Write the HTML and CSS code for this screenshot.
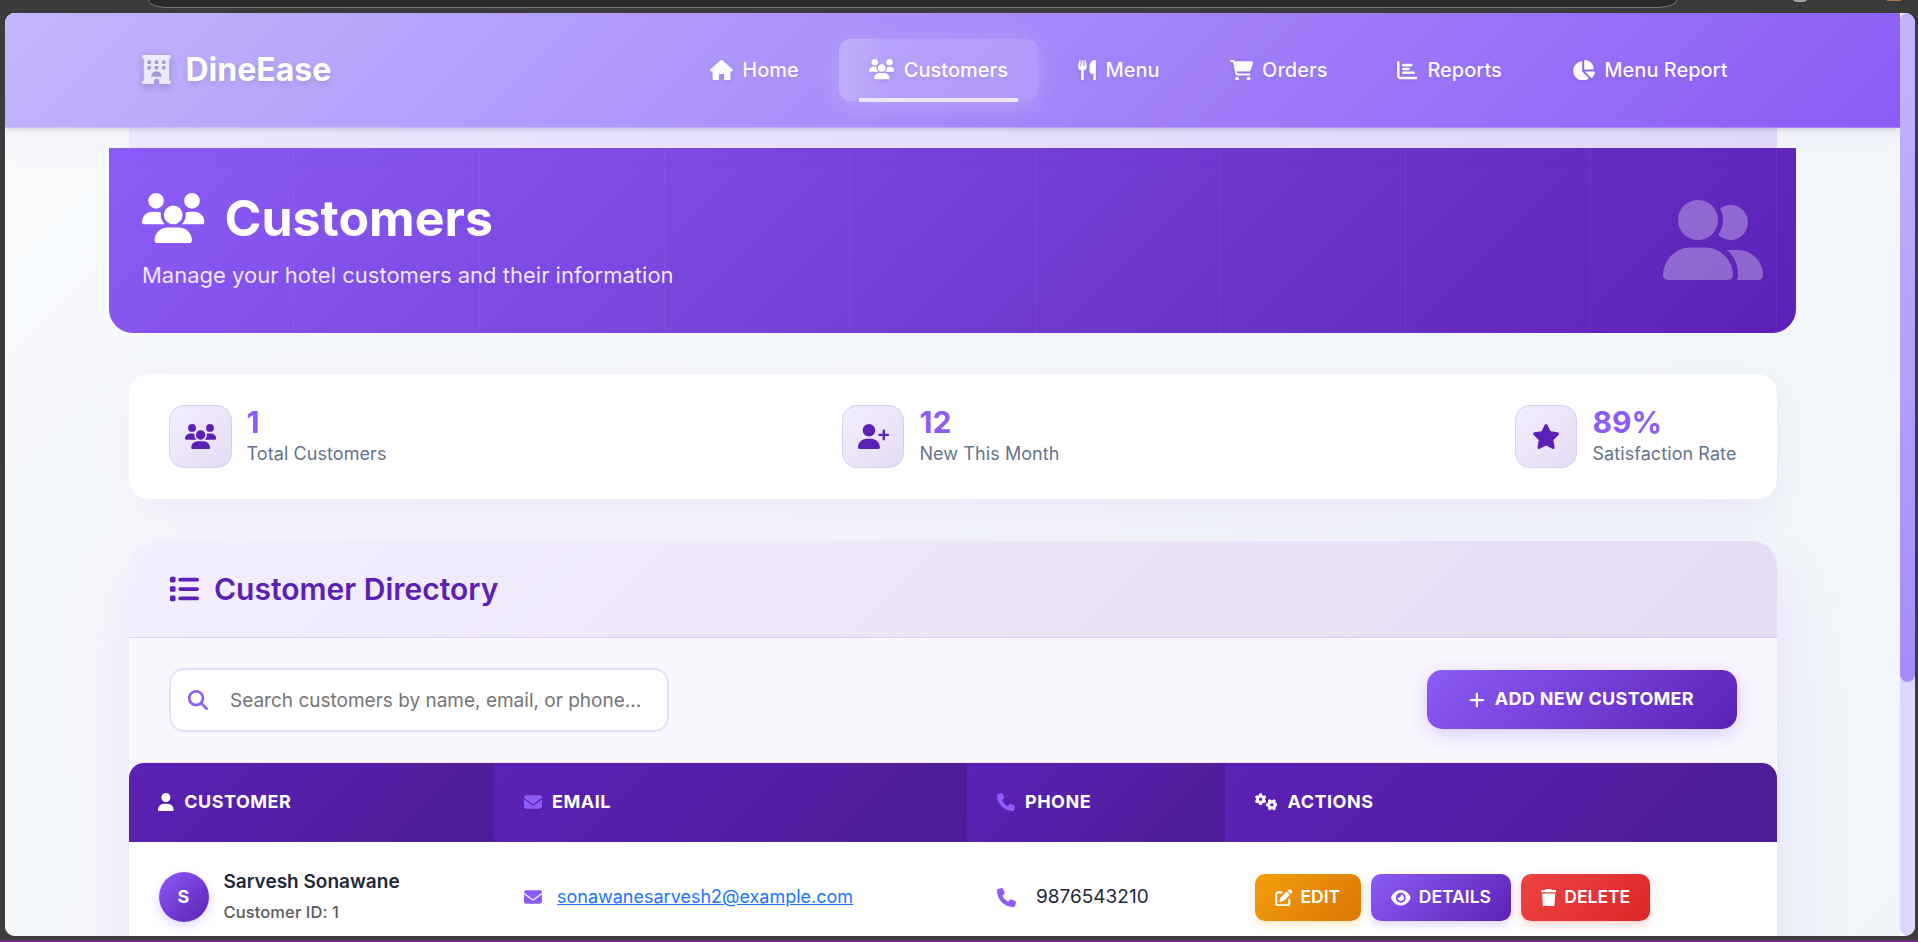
FILE: index.html
```html
<!DOCTYPE html>
<html lang="en">
<head>
<meta charset="utf-8">
<title>DineEase - Customers</title>
<link rel="stylesheet" href="styles.css">
</head>
<body>
<svg class="sprite" aria-hidden="true">
  <symbol id="hotel" viewBox="0 0 512 512"><path d="M0 32C0 14.3 14.3 0 32 0H480c17.7 0 32 14.3 32 32s-14.3 32-32 32V448c17.7 0 32 14.3 32 32s-14.3 32-32 32H304V464c0-26.5-21.5-48-48-48s-48 21.5-48 48v48H32c-17.7 0-32-14.3-32-32s14.3-32 32-32V64C14.3 64 0 49.7 0 32zm96 80v32c0 8.800 7.200 16 16 16h32c8.800 0 16-7.200 16-16V112c0-8.800-7.200-16-16-16H112c-8.800 0-16 7.200-16 16zM240 96c-8.800 0-16 7.200-16 16v32c0 8.800 7.200 16 16 16h32c8.800 0 16-7.200 16-16V112c0-8.800-7.200-16-16-16H240zm112 16v32c0 8.800 7.200 16 16 16h32c8.800 0 16-7.200 16-16V112c0-8.800-7.200-16-16-16H368c-8.800 0-16 7.200-16 16zM112 192c-8.800 0-16 7.200-16 16v32c0 8.800 7.200 16 16 16h32c8.800 0 16-7.200 16-16V208c0-8.800-7.200-16-16-16H112zm112 16v32c0 8.800 7.200 16 16 16h32c8.800 0 16-7.200 16-16V208c0-8.800-7.200-16-16-16H240c-8.800 0-16 7.200-16 16zm144-16c-8.800 0-16 7.200-16 16v32c0 8.800 7.200 16 16 16h32c8.800 0 16-7.200 16-16V208c0-8.800-7.200-16-16-16H368zM328 384c13.300 0 24.300-10.900 21-23.800c-10.600-41.500-48.200-72.200-93-72.200s-82.500 30.700-93 72.200c-3.300 12.800 7.800 23.800 21 23.800H328z"/></symbol>
  <symbol id="house" viewBox="0 0 576 512"><path d="M575.8 255.5c0 18-15 32.1-32 32.1h-32l.7 160.2c0 2.700-.2 5.400-.5 8.100V472c0 22.100-17.900 40-40 40H456c-1.100 0-2.200 0-3.300-.1c-1.400 .1-2.800 .1-4.200 .1H416 392c-22.100 0-40-17.900-40-40V448 384c0-17.700-14.300-32-32-32H256c-17.700 0-32 14.300-32 32v64 24c0 22.100-17.900 40-40 40H160 128.100c-1.500 0-3-.1-4.500-.2c-1.200 .1-2.400 .2-3.600 .2H104c-22.100 0-40-17.900-40-40V360c0-.9 0-1.900 .1-2.800V287.600H32c-18 0-32-14-32-32.100c0-9 3-17 10-24L266.400 8c7-7 15-8 22-8s15 2 21 7L564.800 231.500c8 7 12 15 11 24z"/></symbol>
  <symbol id="users" viewBox="0 0 640 512"><path d="M144 0a80 80 0 1 1 0 160A80 80 0 1 1 144 0zM512 0a80 80 0 1 1 0 160A80 80 0 1 1 512 0zM0 298.7C0 239.800 47.800 192 106.700 192h42.700c15.900 0 31 3.500 44.600 9.700c-1.300 7.200-1.900 14.700-1.900 22.300c0 38.200 16.800 72.500 43.300 96c-.2 0-.4 0-.7 0H21.300C9.600 320 0 310.400 0 298.700zM405.300 320c-.2 0-.4 0-.7 0c26.600-23.500 43.300-57.800 43.300-96c0-7.600-.7-15-1.900-22.300c13.600-6.300 28.700-9.700 44.600-9.700h42.700C592.200 192 640 239.800 640 298.700c0 11.800-9.600 21.300-21.300 21.300H405.300zM224 224a96 96 0 1 1 192 0 96 96 0 1 1 -192 0zM128 485.300C128 411.700 187.700 352 261.300 352H378.700C452.300 352 512 411.700 512 485.300c0 14.700-11.900 26.700-26.700 26.700H154.700c-14.700 0-26.700-11.900-26.700-26.700z"/></symbol>
  <symbol id="utensils" viewBox="0 0 448 512"><path d="M416 0C400 0 288 32 288 176V288c0 35.300 28.700 64 64 64h32V480c0 17.700 14.300 32 32 32s32-14.300 32-32V352 240 32c0-17.700-14.300-32-32-32zM64 16C64 7.800 57.900 1 49.700 .1S34.200 4.600 32.400 12.500L2.100 148.800C.7 155.100 0 161.500 0 167.900c0 45.900 35.100 83.600 80 87.700V480c0 17.700 14.300 32 32 32s32-14.300 32-32V255.600c44.900-4.100 80-41.800 80-87.700c0-6.400-.7-12.800-2.100-19.100L191.600 12.500c-1.800-8-9.300-13.300-17.400-12.400S160 7.800 160 16V150.200c0 5.400-4.400 9.800-9.800 9.800c-5.100 0-9.300-3.900-9.800-9L127.900 14.600C127.200 6.300 120.300 0 112 0s-15.200 6.300-15.900 14.600L83.700 151c-.5 5.100-4.700 9-9.800 9c-5.400 0-9.800-4.400-9.800-9.800V16z"/></symbol>
  <symbol id="cart" viewBox="0 0 576 512"><path d="M0 24C0 10.700 10.700 0 24 0H69.500c22 0 41.500 12.800 50.600 32h411c26.300 0 45.500 25 38.600 50.400l-41 152.300c-8.500 31.400-37 53.300-69.500 53.300H170.700l5.400 28.500c2.200 11.300 12.100 19.500 23.600 19.500H488c13.300 0 24 10.700 24 24s-10.700 24-24 24H199.700c-34.600 0-64.300-24.600-70.700-58.500L77.400 54.500c-.7-3.800-4-6.500-7.900-6.500H24C10.700 48 0 37.300 0 24zM128 464a48 48 0 1 1 96 0 48 48 0 1 1 -96 0zm336-48a48 48 0 1 1 0 96 48 48 0 1 1 0-96z"/></symbol>
  <symbol id="chart-bar" viewBox="0 0 512 512"><path d="M32 32c17.700 0 32 14.300 32 32V400c0 8.800 7.200 16 16 16H480c17.700 0 32 14.300 32 32s-14.300 32-32 32H80c-44.200 0-80-35.800-80-80V64C0 46.300 14.300 32 32 32zm96 96c0-17.700 14.300-32 32-32l192 0c17.700 0 32 14.300 32 32s-14.300 32-32 32H160c-17.700 0-32-14.300-32-32zm32 64H288c17.700 0 32 14.300 32 32s-14.300 32-32 32H160c-17.700 0-32-14.300-32-32s14.300-32 32-32zm0 96H416c17.700 0 32 14.300 32 32s-14.300 32-32 32H160c-17.700 0-32-14.300-32-32s14.300-32 32-32z"/></symbol>
  <symbol id="chart-pie" viewBox="0 0 576 512"><path d="M304 240V16.600c0-9 7-16.600 16-16.600C443.700 0 544 100.300 544 224c0 9-7.600 16-16.600 16H304zM32 272C32 150.700 122.100 50.300 239 34.300c9.200-1.300 17 6.100 17 15.400V288L412.500 444.500c6.700 6.700 6.200 17.700-1.500 23.100C371.800 495.600 323.800 512 272 512C139.500 512 32 404.600 32 272zm526.400 16c9.300 0 16.600 7.800 15.400 17c-7.700 55.900-34.600 105.600-73.900 142.300c-6 5.600-15.400 5.200-21.200-.7L320 288H558.400z"/></symbol>
  <symbol id="user-group" viewBox="0 0 640 512"><path d="M96 128a128 128 0 1 1 256 0A128 128 0 1 1 96 128zM0 482.300C0 383.800 79.800 304 178.300 304h91.400C368.200 304 448 383.800 448 482.300c0 16.400-13.300 29.700-29.700 29.700H29.700C13.300 512 0 498.700 0 482.300zM609.300 512H471.400c5.400-9.400 8.600-20.300 8.600-32v-8c0-60.700-27.100-115.200-69.800-151.800c2.400-.1 4.700-.2 7.100-.2h61.400C567.800 320 640 392.200 640 481.300c0 17-13.800 30.700-30.700 30.700zM432 256c-31 0-59-12.600-79.300-32.900C372.400 196.500 384 163.600 384 128c0-26.800-6.600-52.100-18.300-74.300C384.300 40.100 407.200 32 432 32c61.900 0 112 50.100 112 112s-50.100 112-112 112z"/></symbol>
  <symbol id="user-plus" viewBox="0 0 640 512"><path d="M96 128a128 128 0 1 1 256 0A128 128 0 1 1 96 128zM0 482.300C0 383.800 79.800 304 178.300 304h91.400C368.200 304 448 383.800 448 482.300c0 16.400-13.300 29.700-29.700 29.700H29.700C13.300 512 0 498.700 0 482.300zM504 312V248H440c-13.300 0-24-10.700-24-24s10.700-24 24-24h64V136c0-13.300 10.700-24 24-24s24 10.700 24 24v64h64c13.300 0 24 10.700 24 24s-10.700 24-24 24H552v64c0 13.300-10.700 24-24 24s-24-10.700-24-24z"/></symbol>
  <symbol id="star" viewBox="0 0 576 512"><path d="M316.900 18C311.600 7 300.400 0 288.100 0s-23.400 7-28.800 18L195 150.300 51.400 171.500c-12 1.800-22 10.200-25.700 21.700s-.7 24.200 7.900 32.700L137.800 329 113.200 474.700c-2 12 3 24.200 12.900 31.300s23 8 33.800 2.300l128.300-68.500 128.300 68.500c10.800 5.700 23.900 4.900 33.800-2.300s14.900-19.300 12.900-31.300L438.500 329 542.700 225.900c8.600-8.500 11.700-21.200 7.900-32.700s-13.700-19.900-25.700-21.700L381.200 150.300 316.900 18z"/></symbol>
  <symbol id="list" viewBox="0 0 512 512"><path d="M40 48C26.700 48 16 58.700 16 72v48c0 13.300 10.700 24 24 24H88c13.300 0 24-10.700 24-24V72c0-13.300-10.700-24-24-24H40zM192 64c-17.700 0-32 14.300-32 32s14.300 32 32 32H480c17.700 0 32-14.300 32-32s-14.300-32-32-32H192zm0 160c-17.700 0-32 14.300-32 32s14.300 32 32 32H480c17.700 0 32-14.300 32-32s-14.300-32-32-32H192zm0 160c-17.700 0-32 14.300-32 32s14.300 32 32 32H480c17.700 0 32-14.300 32-32s-14.300-32-32-32H192zM16 232v48c0 13.300 10.700 24 24 24H88c13.300 0 24-10.700 24-24V232c0-13.300-10.700-24-24-24H40c-13.300 0-24 10.700-24 24zM40 368c-13.300 0-24 10.700-24 24v48c0 13.300 10.700 24 24 24H88c13.300 0 24-10.700 24-24V392c0-13.300-10.700-24-24-24H40z"/></symbol>
  <symbol id="search" viewBox="0 0 512 512"><path d="M416 208c0 45.900-14.900 88.300-40 122.700L502.600 457.400c12.500 12.500 12.500 32.800 0 45.300s-32.800 12.500-45.300 0L330.700 376c-34.400 25.200-76.800 40-122.700 40C93.100 416 0 322.900 0 208S93.100 0 208 0S416 93.100 416 208zM208 352a144 144 0 1 0 0-288 144 144 0 1 0 0 288z"/></symbol>
  <symbol id="plus" viewBox="0 0 448 512"><path d="M256 80c0-17.700-14.300-32-32-32s-32 14.300-32 32V224H48c-17.700 0-32 14.300-32 32s14.300 32 32 32H192V432c0 17.700 14.300 32 32 32s32-14.300 32-32V288H400c17.700 0 32-14.300 32-32s-14.300-32-32-32H256V80z"/></symbol>
  <symbol id="user" viewBox="0 0 448 512"><path d="M224 256A128 128 0 1 0 224 0a128 128 0 1 0 0 256zm-45.700 48C79.800 304 0 383.800 0 482.300C0 498.700 13.300 512 29.700 512H418.300c16.400 0 29.700-13.300 29.700-29.700C448 383.800 368.200 304 269.700 304H178.300z"/></symbol>
  <symbol id="envelope" viewBox="0 0 512 512"><path d="M48 64C21.500 64 0 85.500 0 112c0 15.100 7.100 29.300 19.200 38.400L236.800 313.600c11.400 8.500 27 8.500 38.400 0L492.800 150.400c12.100-9.100 19.200-23.300 19.200-38.400c0-26.500-21.500-48-48-48H48zM0 176V384c0 35.300 28.700 64 64 64H448c35.300 0 64-28.700 64-64V176L294.400 339.200c-22.800 17.100-54 17.100-76.800 0L0 176z"/></symbol>
  <symbol id="phone" viewBox="0 0 512 512"><path d="M164.900 24.600c-7.700-18.600-28-28.500-47.400-23.200l-88 24C12.100 30.200 0 46 0 64C0 311.400 200.600 512 448 512c18 0 33.800-12.100 38.600-29.500l24-88c5.300-19.400-4.600-39.700-23.200-47.400l-96-40c-16.300-6.800-35.200-2.100-46.300 11.600L304.700 368C234.300 334.700 177.300 277.700 144 207.300L193.300 167c13.700-11.200 18.400-30 11.600-46.300l-40-96z"/></symbol>
  <symbol id="gears" viewBox="0 0 640 512"><path id="gear" d="M308.500 135.300c7.100-6.300 9.900-16.200 6.200-25c-2.300-5.300-4.800-10.500-7.600-15.500L304 89.400c-3-5-6.300-9.900-9.800-14.600c-5.700-7.600-15.700-10.100-24.700-7.100l-28.200 9.300c-10.700-8.800-23-16-36.200-20.900L199 27.100c-1.900-9.300-9.100-16.700-18.500-17.800C173.900 8.400 167.200 8 160.400 8h-.7c-6.800 0-13.500 .4-20.100 1.200c-9.400 1.100-16.600 8.600-18.500 17.800L115 56.100c-13.300 5-25.500 12.100-36.200 20.900L50.500 67.800c-9-3-19-.5-24.700 7.100c-3.500 4.700-6.800 9.600-9.900 14.600l-3 5.300c-2.800 5-5.300 10.200-7.600 15.600c-3.700 8.700-.9 18.600 6.200 25l22.200 19.800C32.600 161.900 32 168.900 32 176s.6 14.100 1.700 20.900L11.500 216.700c-7.100 6.300-9.900 16.200-6.200 25c2.300 5.300 4.800 10.500 7.600 15.600l3 5.200c3 5.100 6.300 9.900 9.900 14.600c5.700 7.600 15.700 10.100 24.700 7.100l28.200-9.300c10.700 8.800 23 16 36.200 20.900l6.100 29.100c1.900 9.300 9.100 16.700 18.500 17.800c6.700 .8 13.500 1.200 20.400 1.200s13.700-.4 20.400-1.200c9.400-1.100 16.600-8.600 18.500-17.800l6.100-29.100c13.300-5 25.500-12.100 36.200-20.900l28.200 9.300c9 3 19 .5 24.700-7.100c3.500-4.700 6.800-9.500 9.800-14.600l3.100-5.400c2.800-5 5.300-10.200 7.600-15.500c3.700-8.700 .9-18.600-6.200-25l-22.200-19.800c1.100-6.800 1.700-13.800 1.700-20.900s-.6-14.100-1.700-20.900l22.200-19.800zM112 176a48 48 0 1 1 96 0 48 48 0 1 1 -96 0z"/><use href="#gear" transform="translate(480 336) rotate(90) translate(-160 -176)"/></symbol>
  <symbol id="edit" viewBox="0 0 512 512"><path d="M471.600 21.700c-21.900-21.900-57.300-21.900-79.200 0L362.300 51.700l97.900 97.900 30.100-30.100c21.900-21.900 21.900-57.300 0-79.200L471.600 21.700zm-299.200 220c-6.100 6.100-10.800 13.600-13.500 21.900l-29.600 88.800c-2.900 8.600-.6 18.100 5.800 24.600s15.900 8.700 24.600 5.800l88.800-29.600c8.200-2.700 15.700-7.400 21.900-13.500L437.700 172.300 339.700 74.300 172.400 241.700zM96 64C43 64 0 107 0 160V416c0 53 43 96 96 96H352c53 0 96-43 96-96V320c0-17.700-14.300-32-32-32s-32 14.300-32 32v96c0 17.700-14.300 32-32 32H96c-17.700 0-32-14.300-32-32V160c0-17.700 14.300-32 32-32h96c17.700 0 32-14.300 32-32s-14.300-32-32-32H96z"/></symbol>
  <symbol id="eye" viewBox="0 0 576 512"><path d="M288 32c-80.800 0-145.500 36.800-192.600 80.600C48.600 156 17.300 208 2.500 243.700c-3.300 7.900-3.300 16.700 0 24.600C17.300 304 48.600 356 95.400 399.400C142.500 443.200 207.200 480 288 480s145.500-36.800 192.600-80.600c46.800-43.500 78.100-95.400 93-131.100c3.300-7.900 3.300-16.700 0-24.600c-14.900-35.700-46.200-87.700-93-131.100C433.500 68.800 368.800 32 288 32zM144 256a144 144 0 1 1 288 0 144 144 0 1 1 -288 0zm144-64c0 35.300-28.700 64-64 64c-7.100 0-13.900-1.200-20.300-3.300c-5.500-1.800-11.900 1.600-11.700 7.400c.3 6.900 1.300 13.800 3.200 20.700c13.700 51.200 66.400 81.600 117.600 67.900s81.600-66.400 67.900-117.600c-11.100-41.500-47.800-69.400-88.600-71.100c-5.800-.2-9.200 6.100-7.400 11.700c2.100 6.400 3.300 13.200 3.300 20.300z"/></symbol>
  <symbol id="trash" viewBox="0 0 448 512"><path d="M135.200 17.700L128 32H32C14.300 32 0 46.300 0 64S14.300 96 32 96H416c17.700 0 32-14.300 32-32s-14.300-32-32-32H320l-7.200-14.300C307.400 6.800 296.300 0 284.200 0H163.800c-12.100 0-23.200 6.800-28.600 17.700zM416 128H32L53.200 467c1.600 25.300 22.600 45 47.900 45H346.900c25.300 0 46.300-19.700 47.900-45L416 128z"/></symbol>
</svg>

<div class="browser-bar">
  <div class="address"></div>
  <div class="profile"></div>
  <div class="extension"></div>
</div>

<div class="window">
  <div class="page">
    <header class="header">
      <div class="brand"><svg class="icon i512 brand-icon"><use href="#hotel"/></svg><span class="brand-name">DineEase</span></div>
      <nav class="nav">
        <a class="nav-link"><svg class="icon i576"><use href="#house"/></svg><span>Home</span></a>
        <a class="nav-link active"><svg class="icon i640"><use href="#users"/></svg><span>Customers</span></a>
        <a class="nav-link"><svg class="icon i448"><use href="#utensils"/></svg><span>Menu</span></a>
        <a class="nav-link"><svg class="icon i576"><use href="#cart"/></svg><span>Orders</span></a>
        <a class="nav-link"><svg class="icon i512"><use href="#chart-bar"/></svg><span>Reports</span></a>
        <a class="nav-link"><svg class="icon i576"><use href="#chart-pie"/></svg><span>Menu Report</span></a>
      </nav>
    </header>

    <main class="container">
      <section class="banner">
        <div class="banner-text">
          <h1 class="banner-title"><svg class="icon i640"><use href="#users"/></svg><span>Customers</span></h1>
          <p class="banner-sub">Manage your hotel customers and their information</p>
        </div>
        <svg class="icon i640 banner-icon"><use href="#user-group"/></svg>
      </section>

      <section class="stats">
        <div class="stat"><div class="stat-icon"><svg class="icon i640"><use href="#users"/></svg></div><div class="stat-text"><div class="stat-value">1</div><div class="stat-label">Total Customers</div></div></div>
        <div class="stat"><div class="stat-icon"><svg class="icon i640"><use href="#user-plus"/></svg></div><div class="stat-text"><div class="stat-value">12</div><div class="stat-label">New This Month</div></div></div>
        <div class="stat"><div class="stat-icon"><svg class="icon i576"><use href="#star"/></svg></div><div class="stat-text"><div class="stat-value">89%</div><div class="stat-label">Satisfaction Rate</div></div></div>
      </section>

      <section class="directory">
        <h2 class="directory-head"><svg class="icon i512"><use href="#list"/></svg><span>Customer Directory</span></h2>
        <div class="toolbar">
          <div class="search"><svg class="icon i512"><use href="#search"/></svg><span>Search customers by name, email, or phone...</span></div>
          <a class="add-btn"><svg class="icon i448"><use href="#plus"/></svg><span>ADD NEW CUSTOMER</span></a>
        </div>
        <div class="table-head row-grid">
          <div class="th"><svg class="icon i448"><use href="#user"/></svg><span>CUSTOMER</span></div>
          <div class="th"><svg class="icon i512 violet"><use href="#envelope"/></svg><span>EMAIL</span></div>
          <div class="th"><svg class="icon i512 violet"><use href="#phone"/></svg><span>PHONE</span></div>
          <div class="th"><svg class="icon i640"><use href="#gears"/></svg><span>ACTIONS</span></div>
        </div>
        <div class="table-row row-grid">
          <div class="td who">
            <div class="avatar">S</div>
            <div><div class="name">Sarvesh Sonawane</div><div class="cust-id">Customer ID: 1</div></div>
          </div>
          <div class="td mail"><svg class="icon i512 violet"><use href="#envelope"/></svg><a class="mail-link">sonawanesarvesh2@example.com</a></div>
          <div class="td tel"><svg class="icon i512 violet"><use href="#phone"/></svg><span>9876543210</span></div>
          <div class="td actions">
            <a class="btn edit"><svg class="icon i512"><use href="#edit"/></svg><span>EDIT</span></a>
            <a class="btn details"><svg class="icon i576"><use href="#eye"/></svg><span>DETAILS</span></a>
            <a class="btn delete"><svg class="icon i448"><use href="#trash"/></svg><span>DELETE</span></a>
          </div>
        </div>
      </section>
    </main>
  </div>
  <div class="scrollbar"><div class="thumb"></div></div>
</div>
<div class="browser-foot"></div>
</body>
</html>
```
FILE: styles.css
```css
* { box-sizing: border-box; margin: 0; padding: 0; }

body {
  width: 1918px;
  height: 942px;
  overflow: hidden;
  display: flex;
  flex-direction: column;
  background: #3b3b3b;
  font-family: Inter, "Liberation Sans", sans-serif;
  color: #1e293b;
}

.sprite { position: absolute; width: 0; height: 0; }

.icon { display: block; flex: none; height: 1em; fill: currentColor; }
.i448 { width: .875em; }
.i512 { width: 1em; }
.i576 { width: 1.125em; }
.i640 { width: 1.25em; }
.violet { color: #8b5cf6; }

/* Browser chrome */
.browser-bar { flex: none; height: 13px; padding-left: 148px; display: flex; }
.address {
  width: 1529px;
  height: 8px;
  background: #282828;
  border: 1px solid #757575;
  border-top: 0;
  border-radius: 0 0 20px 20px / 0 0 8px 8px;
}
.profile { width: 14px; height: 2px; margin-left: 116px; background: #a8a4a4; border-radius: 0 0 7px 7px / 0 0 2px 2px; }
.extension { width: 14px; height: 1px; margin-left: 80px; background: #a9713f; }
.browser-foot { flex: none; height: 6px; margin-top: auto; border-bottom: 2px solid #6a2c7c; }

.window {
  flex: none;
  height: 923px;
  margin: 0 3px 0 5px;
  display: flex;
  overflow: hidden;
  border-radius: 10px;
  background: #fff;
}

.page {
  width: 1895px;
  height: 923px;
  overflow: hidden;
  background: linear-gradient(135deg, #f8fafc 0%, #f1f5f9 100%);
}

.scrollbar { width: 15px; background: #ddd6fe; border-radius: 10px; }
.thumb { height: 669px; border-radius: 8px; background: linear-gradient(135deg, #c4b5fd, #a78bfa); }

/* Header */
.header {
  position: relative;
  z-index: 2;
  height: 115px;
  padding: 0 142.500px 0 137px;
  display: flex;
  align-items: center;
  justify-content: space-between;
  background: linear-gradient(135deg, #c4b5fd 0%, #a78bfa 50%, #8b5cf6 100%);
  border-bottom: 1px solid rgba(255, 255, 255, .2);
  box-shadow: 0 2px 5px rgba(0, 0, 0, .12), 0 8px 40px rgba(139, 92, 246, .07);
  color: #fff;
}
.brand { display: flex; align-items: center; gap: 14.500px; margin-top: -1px; }
.brand-icon { font-size: 29px; color: #ede9fe; filter: drop-shadow(0 3px 4px rgba(0, 0, 0, .2)); }
.brand-name { font-size: 32px; font-weight: 700; letter-spacing: 0; text-shadow: 0 3px 6px rgba(0, 0, 0, .12); }
.nav { display: flex; align-items: center; gap: 10px; }
.nav-link {
  position: relative;
  height: 62px;
  padding: 0 30px;
  display: flex;
  align-items: center;
  gap: 9.500px;
  font-size: 20px;
  font-weight: 550;
  color: rgba(255, 255, 255, .97);
  text-shadow: 0 1px 2px rgba(0, 0, 0, .1);
}
.nav-link .icon { font-size: 20.500px; filter: drop-shadow(0 1px 2px rgba(0, 0, 0, .12)); }
.nav-link.active {
  color: #fff;
  margin-top: -1px;
  border-radius: 12px;
  background: linear-gradient(90deg, rgba(255, 255, 255, .14), transparent 25%), rgba(255, 255, 255, .16);
  box-shadow: 0 5px 25px rgba(255, 255, 255, .2);
}
.nav-link.active::after {
  content: "";
  position: absolute;
  left: 20px;
  right: 20px;
  bottom: -1px;
  height: 4px;
  background: rgba(255, 255, 255, .75);
}

/* Banner */
.container { width: 1648.500px; margin-left: 123.500px; padding-top: 20px; background: linear-gradient(135deg, #f0ecfe, #e2dcfb) no-repeat 0 0 / 100% 20px; }
.banner {
  height: 185px;
  margin: 0 -18.500px 0 -19.500px;
  padding: 40px 33px 0;
  display: flex;
  justify-content: space-between;
  border-radius: 0 0 24px 24px;
  color: #fff;
  background:
    repeating-linear-gradient(90deg, transparent 0 184.300px, rgba(255, 255, 255, .05) 184.300px 185.300px),
    linear-gradient(135deg, #8b5cf6 0%, #5b21b6 100%);
}
.banner-title { display: flex; align-items: center; gap: 20px; font-size: 50px; font-weight: 700; line-height: 60px; }
.banner-sub { margin-top: 11px; font-size: 22px; line-height: 33px; color: rgba(255, 255, 255, .88); }
.banner-icon { margin-top: 12px; font-size: 80px; color: rgba(255, 255, 255, .3); }

/* Stats */
.stats {
  height: 125px;
  margin-top: 41px;
  padding: 0 40.500px;
  display: flex;
  align-items: center;
  justify-content: space-between;
  background: #fff;
  border-radius: 20px;
  box-shadow: 0 10px 38px rgba(139, 92, 246, .09);
}
.stat { display: flex; align-items: center; gap: 15px; }
.stat-icon {
  width: 62.500px;
  height: 62.500px;
  display: flex;
  align-items: center;
  justify-content: center;
  font-size: 25px;
  color: #5b21b6;
  background: linear-gradient(135deg, #f3effe, #e5dcf3);
  border: 1px solid #dacbf7;
  border-radius: 15px;
}
.stat-text { margin-top: -2px; }
.stat-value { font-size: 30px; font-weight: 700; line-height: 36px; color: #8b5cf6; }
.stat-label { font-size: 18px; line-height: 27px; letter-spacing: .08px; color: #64748b; }

/* Directory */
.directory {
  height: 500px;
  margin-top: 42px;
  overflow: hidden;
  background: #fff;
  border-radius: 25px;
  box-shadow: 0 25px 75px rgba(139, 92, 246, .14);
}
.directory-head {
  height: 97px;
  padding: 0 40.500px;
  display: flex;
  align-items: center;
  gap: 15px;
  font-size: 30px;
  font-weight: 600;
  color: #5b21b6;
  background: linear-gradient(135deg, #f3effe 0%, #e5dcf3 100%);
  border-bottom: 1px solid #dacbf7;
}
.toolbar {
  height: 125px;
  padding: 0 40.500px;
  display: flex;
  align-items: center;
  justify-content: space-between;
  background: #faf8ff;
  border-bottom: 1px solid #efe8ff;
}
.search {
  width: 500px;
  height: 64px;
  padding: 0 17px;
  display: flex;
  align-items: center;
  gap: 22px;
  font-size: 19px;
  white-space: nowrap;
  color: #757575;
  background: #fff;
  border: 2px solid #e7dcfe;
  border-radius: 15px;
}
.search .icon { font-size: 20px; color: #8b5cf6; }
.add-btn {
  width: 310px;
  height: 59px;
  margin-top: -1px;
  padding-bottom: 2px;
  display: flex;
  align-items: center;
  justify-content: center;
  gap: 10px;
  font-size: 18px;
  font-weight: 700;
  letter-spacing: .3px;
  white-space: nowrap;
  color: #fff;
  background: linear-gradient(135deg, #8b5cf6, #5b21b6);
  border-radius: 15px;
  box-shadow: 0 5px 19px rgba(139, 92, 246, .3);
}
.add-btn .icon { margin-top: 3px; }
.row-grid { display: grid; grid-template-columns: 365.500px 473px 258px 1fr; }
.table-head { height: 79px; overflow: hidden; border-radius: 15px 15px 0 0; color: #fff; }
.th {
  padding: 0 0 2px 29.500px;
  display: flex;
  align-items: center;
  gap: 10.500px;
  font-size: 18px;
  font-weight: 700;
  letter-spacing: .5px;
  background: linear-gradient(135deg, #5b21b6, #4c1d95);
}
.table-row { height: 109px; }
.td { padding-left: 30px; display: flex; align-items: center; }
.who { gap: 15px; }
.avatar {
  width: 50px;
  height: 50px;
  display: flex;
  align-items: center;
  justify-content: center;
  font-size: 18px;
  font-weight: 700;
  color: #fff;
  background: linear-gradient(135deg, #8b5cf6, #5b21b6);
  border-radius: 50%;
  box-shadow: 0 4px 12px rgba(139, 92, 246, .25);
}
.name { font-size: 19px; font-weight: 600; line-height: 30px; }
.cust-id { font-size: 16.500px; font-weight: 500; line-height: 30px; letter-spacing: .1px; color: #5c5c5c; }
.mail { gap: 15px; font-size: 18px; }
.mail-link { color: #1a75ff; text-decoration: underline; }
.tel { gap: 20px; font-size: 19px; }
.tel .icon { margin-top: 1px; }
.actions { gap: 10px; padding-top: 1px; }
.btn {
  height: 47px;
  padding: 0 20px 2px;
  display: flex;
  align-items: center;
  gap: 8px;
  font-size: 17.500px;
  font-weight: 600;
  color: #fff;
  border-radius: 10px;
}
.btn .icon { margin-top: 3px; }
.edit { padding-right: 21px; background: linear-gradient(135deg, #f59e0b, #d97706); box-shadow: 0 4px 10px rgba(245, 158, 11, .25); }
.details { background: linear-gradient(135deg, #8b5cf6, #5b21b6); box-shadow: 0 4px 10px rgba(139, 92, 246, .25); }
.delete { background: linear-gradient(135deg, #ef4444, #dc2626); box-shadow: 0 4px 10px rgba(239, 68, 68, .25); }
```
